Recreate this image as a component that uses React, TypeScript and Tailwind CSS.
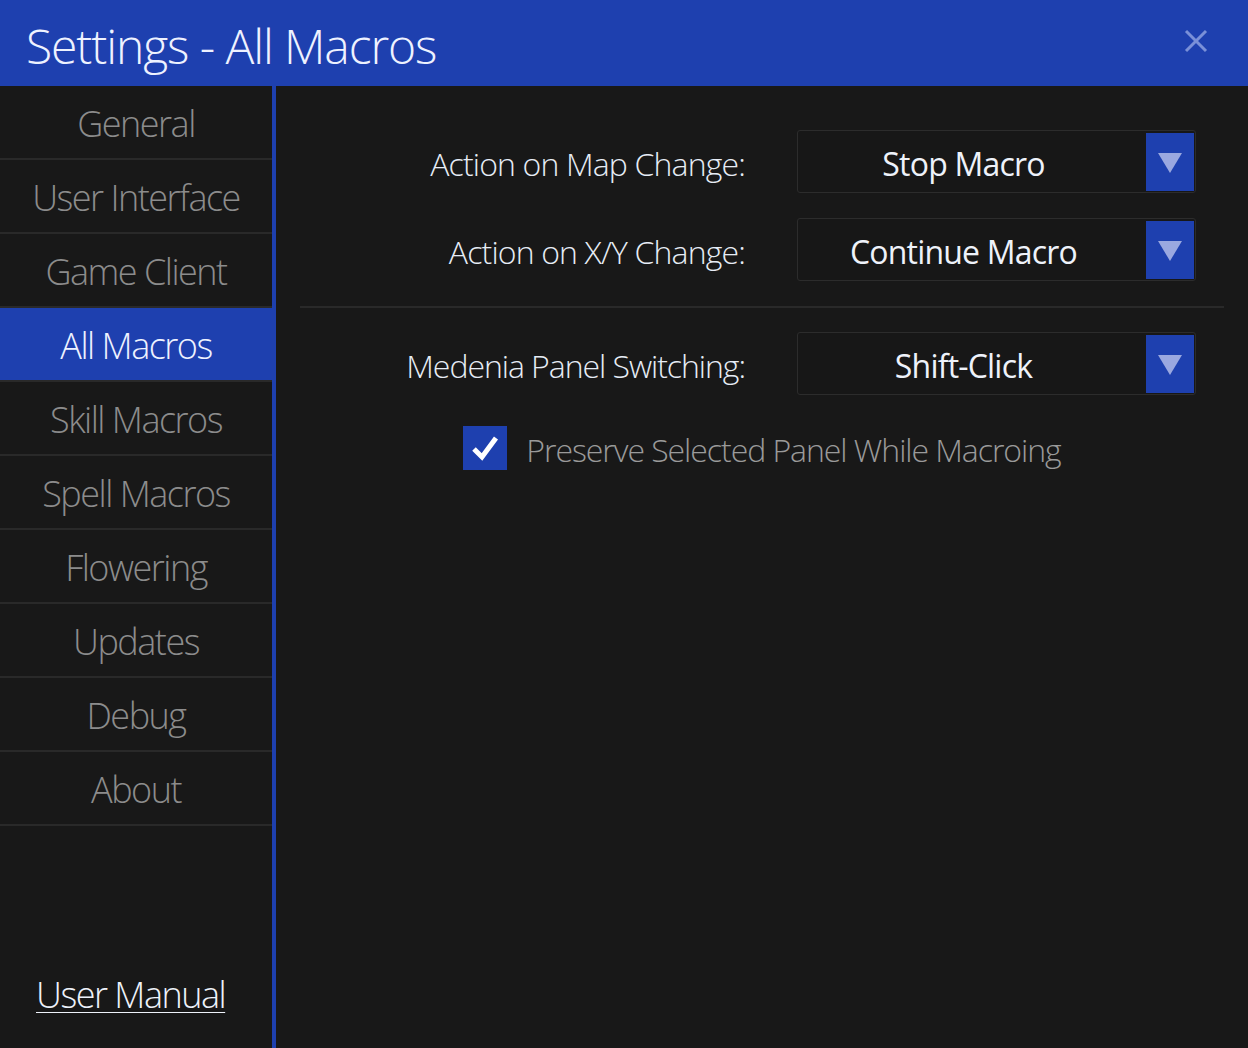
import React from "react";

const items = [
  "General",
  "User Interface",
  "Game Client",
  "All Macros",
  "Skill Macros",
  "Spell Macros",
  "Flowering",
  "Updates",
  "Debug",
  "About",
];

function Triangle() {
  return (
    <svg width="24" height="20" viewBox="0 0 24 20">
      <polygon points="0,0 24,0 12,20" fill="#9aa8e0" />
    </svg>
  );
}

function Dropdown({ value }: { value: string }) {
  return (
    <div className="flex h-[63px] w-[399px] rounded-[3px] border border-[#2c2c2c] bg-[#171717] p-px">
      <div className="flex flex-1 items-center justify-center pr-[18px] pt-[5px] text-[32px] font-normal tracking-[-0.8px] text-[#eef2fa]">
        {value}
      </div>
      <div className="flex w-[48px] items-center justify-center pt-[1px]">
        <div className="flex h-full w-full items-center justify-center bg-[#1e40af] pt-[1px]">
          <Triangle />
        </div>
      </div>
    </div>
  );
}

export default function App() {
  return (
    <div
      className="flex h-[1048px] w-[1248px] flex-col overflow-hidden bg-[#181818]"
      style={{ fontFamily: '"Open Sans", "Noto Sans", sans-serif' }}
    >
      <header className="flex h-[86px] shrink-0 items-center justify-between bg-[#1e40af] pl-[26px] pr-[40px]">
        <h1 className="pt-[6px] text-[48px] font-light leading-none tracking-[-1.1px] text-[#eef2ff]">
          Settings - All Macros
        </h1>
        <svg width="24" height="24" viewBox="0 0 24 24" className="mb-[4px]">
          <line x1="2" y1="2" x2="22" y2="22" stroke="#7a90d8" strokeWidth="3" />
          <line x1="22" y1="2" x2="2" y2="22" stroke="#7a90d8" strokeWidth="3" />
        </svg>
      </header>
      <div className="flex flex-1">
        <nav className="flex w-[276px] shrink-0 flex-col border-r-4 border-[#1e40af]">
          {items.map((it) => (
            <div
              key={it}
              className={`flex h-[74px] items-center justify-center border-b-2 border-[#292929] pt-[4px] text-[36px] font-light tracking-[-1.5px] ${
                it === "All Macros" ? "bg-[#1e40af] text-[#eef2ff]" : "text-[#8c8c8c]"
              }`}
            >
              {it}
            </div>
          ))}
          <div className="mt-auto pb-[26px] pl-[36px]">
            <a className="text-[36px] font-light tracking-[-1.5px] text-[#eef2fa] underline decoration-1 underline-offset-[4px]">
              User Manual
            </a>
          </div>
        </nav>
        <main className="flex flex-1 flex-col px-[24px] pt-[44px]">
          <div className="grid grid-cols-[445px_399px] items-center gap-x-[52px] gap-y-[25px]">
            <div className="pt-[5px] text-right text-[32px] font-light tracking-[-0.85px] text-[#e6ecf5]">Action on Map Change:</div>
            <Dropdown value="Stop Macro" />
            <div className="pt-[5px] text-right text-[32px] font-light tracking-[-0.85px] text-[#e6ecf5]">Action on X/Y Change:</div>
            <Dropdown value="Continue Macro" />
          </div>
          <div className="mt-[25px] h-[2px] bg-[#292929]" />
          <div className="mt-[24px] grid grid-cols-[445px_399px] items-center gap-x-[52px]">
            <div className="pt-[5px] text-right text-[32px] font-light tracking-[-1.05px] text-[#e6ecf5]">Medenia Panel Switching:</div>
            <Dropdown value="Shift-Click" />
          </div>
          <div className="mt-[27px] flex items-center justify-center gap-[19px]">
            <div className="flex h-[44px] w-[44px] items-center justify-center bg-[#1e40af]">
              <svg width="30" height="30" viewBox="0 0 30 30">
                <polyline points="4,16 12,24 26,5" fill="none" stroke="#ffffff" strokeWidth="5" />
              </svg>
            </div>
            <span className="pt-[4px] text-[32px] font-light tracking-[-1.05px] text-[#9a9a9a]">
              Preserve Selected Panel While Macroing
            </span>
          </div>
        </main>
      </div>
    </div>
  );
}
